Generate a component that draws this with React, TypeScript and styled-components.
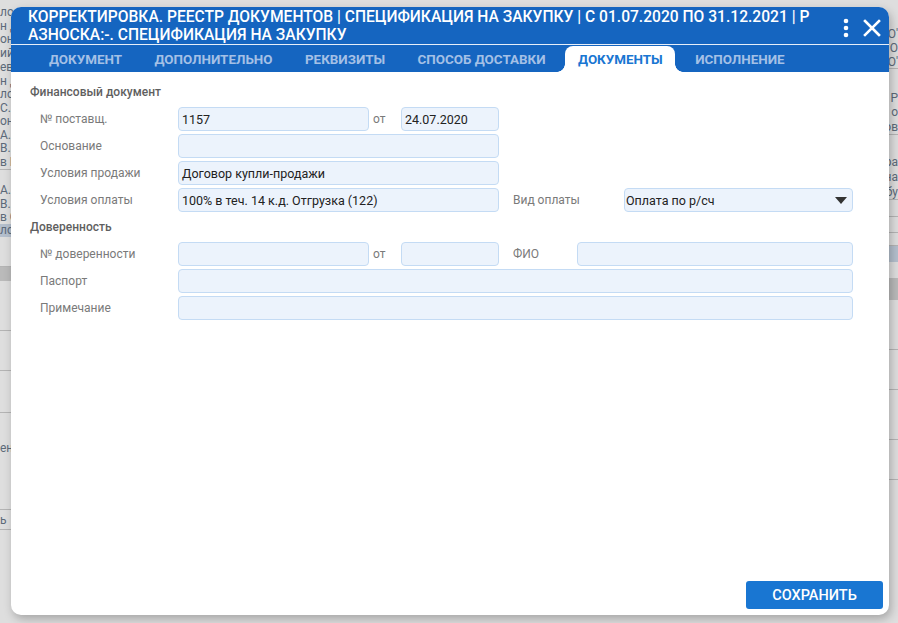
import React from "react";
import styled, { createGlobalStyle } from "styled-components";

const Global = createGlobalStyle`
  html, body { margin: 0; padding: 0; }
  body { font-family: Roboto, "Noto Sans", "Liberation Sans", sans-serif; width: 898px; height: 623px; overflow: hidden; background: #fff; }
  * { box-sizing: border-box; }
`;

const Page = styled.div`
  position: relative;
  width: 898px;
  height: 623px;
  overflow: hidden;
`;

const BgPage = styled.div`
  display: flex;
  justify-content: space-between;
  height: 100%;
  background: #fff;
`;

const BgCol = styled.div<{ $align: "left" | "right" }>`
  width: 30px;
  display: flex;
  flex-direction: column;
  align-items: ${(p) => (p.$align === "left" ? "flex-start" : "flex-end")};
  text-align: ${(p) => p.$align};
  padding-top: 6px;
`;

const BgRow = styled.div<{ $h: number; $tone?: "blue" | "grey" | "line" }>`
  width: 100%;
  height: ${(p) => p.$h}px;
  font-size: 12px;
  line-height: ${(p) => p.$h}px;
  color: #6b7a8c;
  white-space: nowrap;
  overflow: hidden;
  background: ${(p) => (p.$tone === "blue" ? "#cfdcec" : p.$tone === "grey" ? "#d6d6d6" : "transparent")};
  border-bottom: ${(p) => (p.$tone === "line" ? "1px solid #cfcfcf" : "none")};
`;

const Overlay = styled.div`
  position: absolute;
  inset: 0;
  background: rgba(0, 0, 0, 0.13);
`;

const Modal = styled.div`
  position: absolute;
  left: 11px;
  top: 7px;
  width: 878px;
  height: 608px;
  background: #fff;
  border-radius: 10px;
  box-shadow: 2px 4px 10px rgba(0, 0, 0, 0.25);
  display: flex;
  flex-direction: column;
  overflow: hidden;
`;

const Header = styled.div`
  background: #1565c0;
`;

const TitleBar = styled.div`
  display: flex;
  align-items: flex-start;
  padding: 1px 8px 0 17px;
  height: 38px;
  border-bottom: 1px solid #e6eef9;
`;

const Title = styled.div`
  flex: 1;
  color: #fff;
  font-size: 15.6px;
  font-weight: 500;
  line-height: 18px;
  text-transform: uppercase;
  white-space: nowrap;
`;

const TitleLine = styled.div``;

const HeadIcons = styled.div`
  display: flex;
  align-items: center;
  gap: 14px;
  padding-top: 10px;
`;

const IconBtn = styled.button`
  border: 0;
  background: transparent;
  padding: 0;
  display: flex;
  cursor: pointer;
`;

const Tabs = styled.div`
  display: flex;
  align-items: flex-end;
  height: 27px;
  padding-left: 25px;
`;

const Tab = styled.div<{ $active?: boolean }>`
  position: relative;
  height: 26px;
  padding: 0 12.5px 0 13px;
  margin-right: 7px;
  display: flex;
  align-items: center;
  font-size: 13.4px;
  font-weight: 700;
  text-transform: uppercase;
  color: ${(p) => (p.$active ? "#1976d2" : "#a4c0e6")};
  background: ${(p) => (p.$active ? "#fff" : "transparent")};
  border-radius: 8px 8px 0 0;
  ${(p) =>
    p.$active &&
    `
    &::before, &::after {
      content: "";
      position: absolute;
      bottom: 0;
      width: 8px;
      height: 8px;
      background: radial-gradient(circle at var(--cx) 0, transparent 7.5px, #fff 8px);
    }
    &::before { left: -8px; --cx: 0; }
    &::after { right: -8px; --cx: 100%; }
  `}
`;

const Body = styled.div`
  flex: 1;
  padding: 12px 36px 0 19px;
  display: flex;
  flex-direction: column;
`;

const SectionTitle = styled.div<{ $mt?: number }>`
  font-size: 12px;
  font-weight: 500;
  color: #5f5f5f;
  height: 17px;
  line-height: 17px;
  margin-top: ${(p) => p.$mt ?? 0}px;
  margin-bottom: 6px;
`;

const Row = styled.div`
  display: flex;
  align-items: center;
  height: 24px;
  margin-bottom: 3px;
  padding-left: 10px;
`;

const Label = styled.div<{ $w: number }>`
  width: ${(p) => p.$w}px;
  flex: none;
  font-size: 12px;
  color: #7a7a7a;
  padding-left: ${(p) => (p.$w < 40 ? 4 : 0)}px;
  white-space: nowrap;
`;

const Field = styled.div<{ $w?: number }>`
  ${(p) => (p.$w ? `width: ${p.$w}px; flex: none;` : "flex: 1;")}
  height: 24px;
  border: 1px solid #c4dbf4;
  border-radius: 4px;
  background: #ecf3fc;
  font-size: 12.5px;
  color: #222;
  display: flex;
  align-items: center;
  padding: 0 3px;
  white-space: nowrap;
`;

const Gap = styled.div<{ $w: number }>`
  width: ${(p) => p.$w}px;
  flex: none;
`;

const SelectField = styled(Field)`
  justify-content: space-between;
  padding-right: 5px;
  padding-left: 1px;
`;

const Footer = styled.div`
  display: flex;
  justify-content: flex-end;
  padding: 0 6px 6px 0;
`;

const SaveButton = styled.button`
  width: 137px;
  height: 28px;
  border: 0;
  border-radius: 3px;
  background: #1976d2;
  color: #fff;
  font-family: Roboto, "Liberation Sans", sans-serif;
  font-size: 14.5px;
  font-weight: 500;
  text-transform: uppercase;
  cursor: pointer;
`;

type BgDef = [number, string, ("blue" | "grey" | "line")?];

const leftRows: BgDef[] = [
  [13, "ло"], [14, "н Д"], [13, "он"], [14, "ий"], [14, "ев"], [14, "н Д"], [13, "ло"],
  [14, "С.І"], [13, "он"], [14, "А."], [13, "В.И"], [15, "в Е", "line"], [13, ""],
  [14, "А."], [14, "В.И"], [13, "в С"], [13, "ло", "blue"], [30, "", "line"], [14, "", "grey"],
  [50, "", "line"], [40, "", "line"], [42, "", "line"], [70, "ен"], [27, "", "line"],
  [20, "ь", "line"],
];
const rightRows: BgDef[] = [
  [21, ""], [14, "O'"], [14, "O"], [14, "O'", "line"], [22, ""], [14, "P"], [14, "о"], [16, "ов", "line"],
  [20, ""], [15, "ра"], [15, "на"], [15, "бу", "line"], [17, "", "line"], [16, "", "line"],
  [13, "", "line"], [16, "", "blue"], [16, ""], [22, "", "grey"], [50, "", "line"], [40, "", "line"],
  [50, "", "line"], [40, "", "line"],
];

const Dots = () => (
  <svg width="6" height="20" viewBox="0 0 6 20" fill="#fff">
    <circle cx="3" cy="3" r="2.3" />
    <circle cx="3" cy="10" r="2.3" />
    <circle cx="3" cy="17" r="2.3" />
  </svg>
);

const Close = () => (
  <svg width="18" height="18" viewBox="0 0 18 18" stroke="#fff" strokeWidth="2.6" strokeLinecap="square">
    <path d="M2 2 L16 16 M16 2 L2 16" />
  </svg>
);

const Caret = () => (
  <svg width="12" height="7" viewBox="0 0 12 7" fill="#333">
    <path d="M0 0 H12 L6 7 Z" />
  </svg>
);

const tabs = ["Документ", "Дополнительно", "Реквизиты", "Способ доставки", "Документы", "Исполнение"];

export default function App() {
  return (
    <Page>
      <Global />
      <BgPage>
        <BgCol $align="left">
          {leftRows.map(([h, t, tone], i) => (
            <BgRow key={i} $h={h} $tone={tone}>{t}</BgRow>
          ))}
        </BgCol>
        <BgCol $align="right">
          {rightRows.map(([h, t, tone], i) => (
            <BgRow key={i} $h={h} $tone={tone}>{t}</BgRow>
          ))}
        </BgCol>
      </BgPage>
      <Overlay />
      <Modal>
        <Header>
          <TitleBar>
            <Title>
              <TitleLine>Корректировка. Реестр документов | Спецификация на закупку | С 01.07.2020 по 31.12.2021 | Р</TitleLine>
              <TitleLine>азноска:-. Спецификация на закупку</TitleLine>
            </Title>
            <HeadIcons>
              <IconBtn aria-label="menu"><Dots /></IconBtn>
              <IconBtn aria-label="close"><Close /></IconBtn>
            </HeadIcons>
          </TitleBar>
          <Tabs>
            {tabs.map((t) => (
              <Tab key={t} $active={t === "Документы"}>{t}</Tab>
            ))}
          </Tabs>
        </Header>
        <Body>
          <SectionTitle>Финансовый документ</SectionTitle>
          <Row>
            <Label $w={138}>№ поставщ.</Label>
            <Field $w={191}>1157</Field>
            <Label $w={32}>от</Label>
            <Field $w={98}>24.07.2020</Field>
          </Row>
          <Row>
            <Label $w={138}>Основание</Label>
            <Field $w={321} />
          </Row>
          <Row>
            <Label $w={138}>Условия продажи</Label>
            <Field $w={321}>Договор купли-продажи</Field>
          </Row>
          <Row>
            <Label $w={138}>Условия оплаты</Label>
            <Field $w={321}>100% в теч. 14 к.д. Отгрузка (122)</Field>
            <Gap $w={14} />
            <Label $w={111}>Вид оплаты</Label>
            <SelectField>
              <span>Оплата по р/сч</span>
              <Caret />
            </SelectField>
          </Row>
          <SectionTitle $mt={4}>Доверенность</SectionTitle>
          <Row>
            <Label $w={138}>№ доверенности</Label>
            <Field $w={191} />
            <Label $w={32}>от</Label>
            <Field $w={98} />
            <Gap $w={14} />
            <Label $w={64}>ФИО</Label>
            <Field />
          </Row>
          <Row>
            <Label $w={138}>Паспорт</Label>
            <Field />
          </Row>
          <Row>
            <Label $w={138}>Примечание</Label>
            <Field />
          </Row>
        </Body>
        <Footer>
          <SaveButton>Сохранить</SaveButton>
        </Footer>
      </Modal>
    </Page>
  );
}
